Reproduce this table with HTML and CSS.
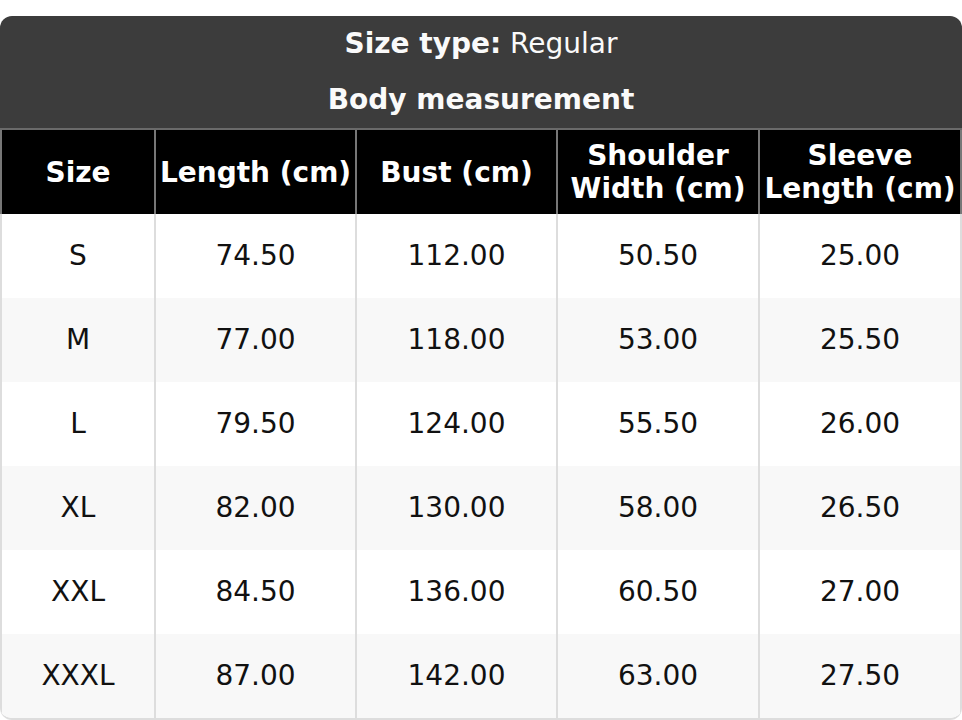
FILE: index.html
```html
<!DOCTYPE html>
<html lang="en">
<head>
<meta charset="utf-8">
<title>Size chart</title>
<link rel="stylesheet" href="styles.css">
</head>
<body>
<div class="card">
  <div class="title">
    <div class="title-line"><b>Size type:</b> Regular</div>
    <div class="title-line"><b>Body measurement</b></div>
  </div>
  <div class="grid">
    <div class="th">Size</div>
    <div class="th">Length (cm)</div>
    <div class="th">Bust (cm)</div>
    <div class="th">Shoulder Width (cm)</div>
    <div class="th">Sleeve Length (cm)</div>

    <div class="td">S</div><div class="td">74.50</div><div class="td">112.00</div><div class="td">50.50</div><div class="td">25.00</div>
    <div class="td alt">M</div><div class="td alt">77.00</div><div class="td alt">118.00</div><div class="td alt">53.00</div><div class="td alt">25.50</div>
    <div class="td">L</div><div class="td">79.50</div><div class="td">124.00</div><div class="td">55.50</div><div class="td">26.00</div>
    <div class="td alt">XL</div><div class="td alt">82.00</div><div class="td alt">130.00</div><div class="td alt">58.00</div><div class="td alt">26.50</div>
    <div class="td">XXL</div><div class="td">84.50</div><div class="td">136.00</div><div class="td">60.50</div><div class="td">27.00</div>
    <div class="td alt">XXXL</div><div class="td alt">87.00</div><div class="td alt">142.00</div><div class="td alt">63.00</div><div class="td alt">27.50</div>
  </div>
</div>
</body>
</html>
```
FILE: styles.css
```css
* { box-sizing: border-box; }
html, body { margin: 0; padding: 0; background: #fff; }
body {
  padding-top: 16px;
  font-family: "DejaVu Sans", sans-serif;
  font-size: 28px;
}
.card {
  width: 962px;
  border-radius: 12px;
  overflow: hidden;
  border-bottom: 2px solid #dddddd;
}
.title {
  background: #3c3c3c;
  color: #fafafa;
  text-align: center;
}
.title-line {
  height: 56px;
  line-height: 56px;
}
.title-line b { font-weight: bold; }
.grid {
  display: grid;
  grid-template-columns: 154px 201px 201px 202px 204px;
  border-top: 2px solid #6a6a6a;
}
.th {
  background: #000;
  color: #fff;
  font-weight: bold;
  text-align: center;
  height: 84px;
  line-height: 33px;
  padding: 0 3px;
  display: flex;
  align-items: center;
  justify-content: center;
  border-left: 2px solid #777;
}
.th:nth-child(5n) { border-right: 2px solid #777; }
.td {
  background: #fff;
  color: #111;
  text-align: center;
  height: 84px;
  line-height: 84px;
  border-left: 2px solid #dddddd;
}
.td:nth-child(5n) { border-right: 2px solid #dddddd; }
.td.alt { background: #f8f8f8; }
```
